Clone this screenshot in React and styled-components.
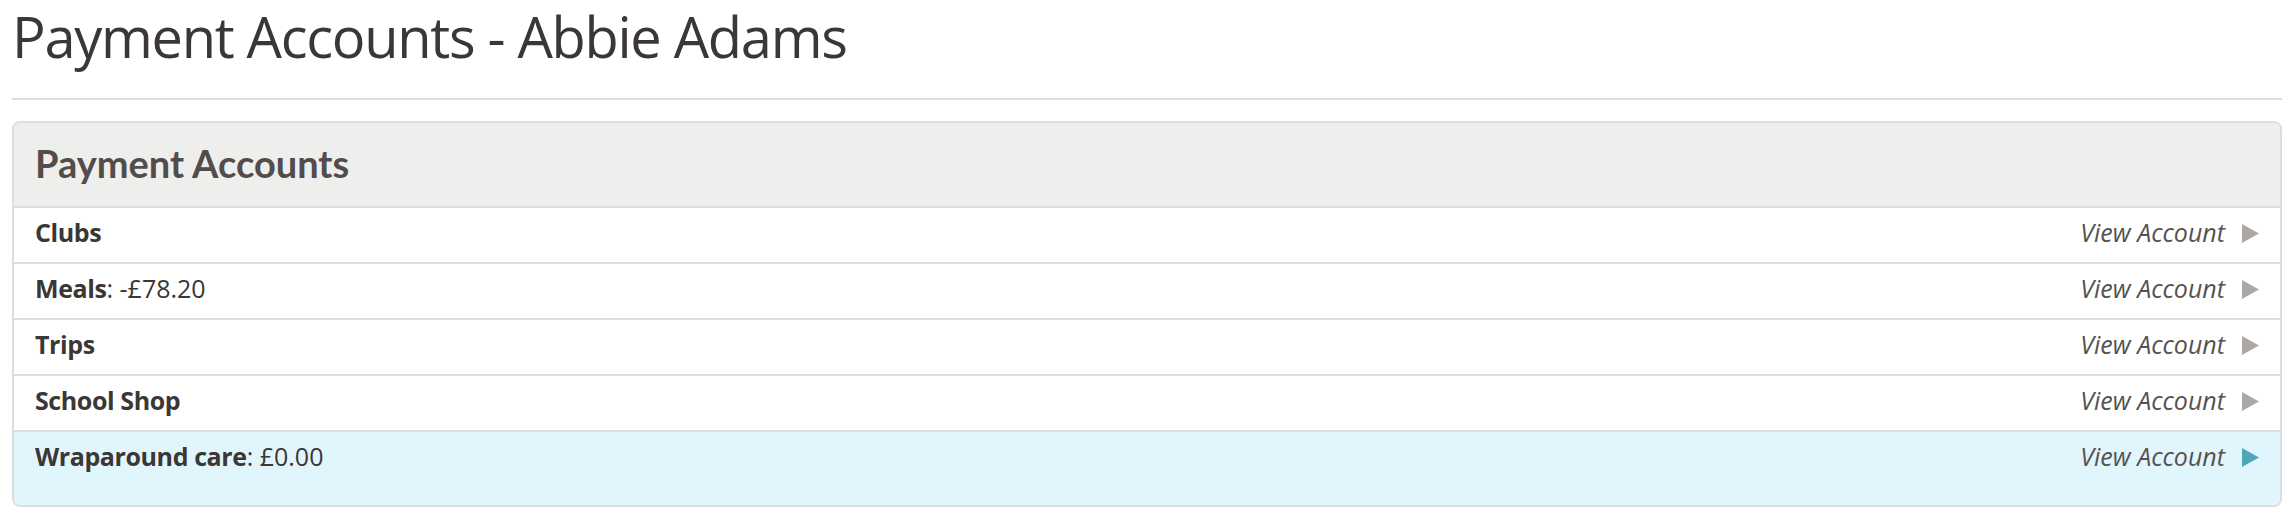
import React from "react";
import styled, { createGlobalStyle } from "styled-components";

const GlobalStyle = createGlobalStyle`
  html, body {
    margin: 0;
    padding: 0;
    background: #ffffff;
  }
  body {
    font-family: "Open Sans", "Noto Sans", Arial, sans-serif;
    color: #3b3735;
  }
`;

const Page = styled.div`
  padding: 0 8px 0 12px;
`;

const Title = styled.h1`
  margin: 3px 0 29px 0;
  font-size: 56px;
  line-height: 66px;
  font-weight: 400;
  color: #3b3735;
  letter-spacing: -1.3px;
`;

const Divider = styled.hr`
  margin: 0 0 21px;
  border: 0;
  height: 2px;
  background: #dddddd;
`;

const Panel = styled.section`
  border: 2px solid #dddddd;
  border-radius: 8px;
  overflow: hidden;
`;

const PanelHeader = styled.div`
  background: #eeeeec;
  border-bottom: 2px solid #dddddd;
  padding: 14px 21px 17px;
  h2 {
    margin: 0;
    font-family: Lato, "Open Sans", sans-serif;
    font-size: 38px;
    line-height: 52px;
    font-weight: 700;
    color: #524d4a;
  }
`;

const AccountList = styled.ul`
  list-style: none;
  margin: 0;
  padding: 0;
`;

const AccountRow = styled.li`
  display: flex;
  justify-content: space-between;
  align-items: flex-start;
  padding: 7px 21px ${(p) => (p.$active ? "32px" : "13px")};
  background: ${(p) => (p.$active ? "#e0f6fc" : "#ffffff")};
  border-bottom: 2px solid #dddddd;
  font-size: 25px;
  line-height: 34px;
  &:last-child {
    border-bottom: 0;
  }
`;

const Name = styled.span`
  color: #3b3735;
  strong {
    font-weight: 700;
    letter-spacing: -0.4px;
  }
`;

const ViewLink = styled.a`
  display: flex;
  align-items: center;
  gap: 17px;
  font-style: italic;
  color: #57524f;
  text-decoration: none;
  cursor: pointer;
`;

const Arrow = styled.svg`
  width: 17px;
  height: 19px;
  fill: ${(p) => (p.$active ? "#4fa6bb" : "#aca8a6")};
  margin-top: 2px;
`;

const accounts = [
  { name: "Clubs" },
  { name: "Meals", balance: "-£78.20" },
  { name: "Trips" },
  { name: "School Shop" },
  { name: "Wraparound care", balance: "£0.00", active: true },
];

export default function App() {
  return (
    <Page>
      <GlobalStyle />
      <Title>Payment Accounts - Abbie Adams</Title>
      <Divider />
      <Panel>
        <PanelHeader>
          <h2>Payment Accounts</h2>
        </PanelHeader>
        <AccountList>
          {accounts.map((a) => (
            <AccountRow key={a.name} $active={a.active}>
              <Name>
                <strong>{a.name}</strong>
                {a.balance ? `: ${a.balance}` : ""}
              </Name>
              <ViewLink>
                View Account
                <Arrow $active={a.active} viewBox="0 0 17 19">
                  <polygon points="0,0 17,9.5 0,19" />
                </Arrow>
              </ViewLink>
            </AccountRow>
          ))}
        </AccountList>
      </Panel>
    </Page>
  );
}
